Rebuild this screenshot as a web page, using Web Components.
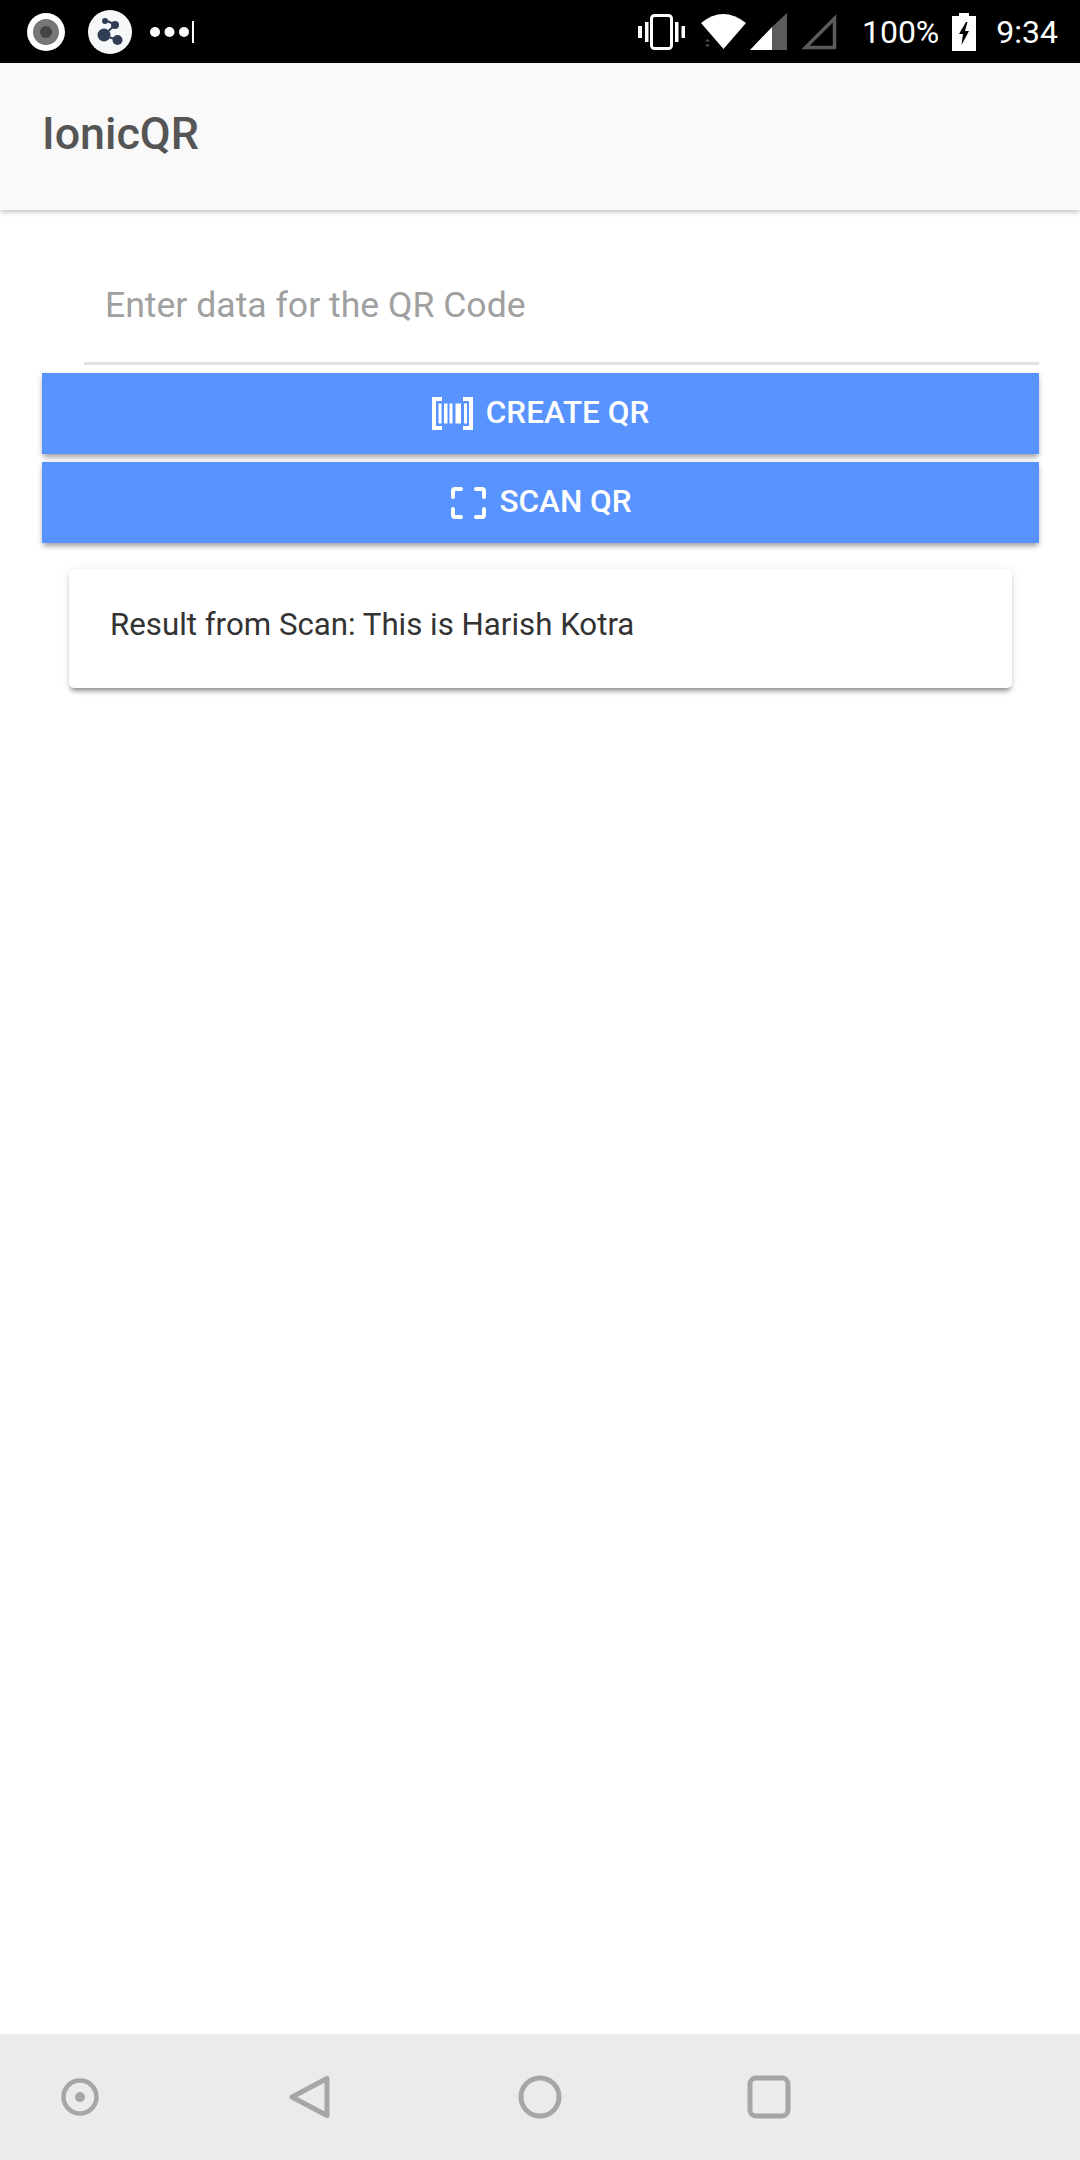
<!DOCTYPE html>
<html lang="en"><head><meta charset="utf-8"><title>IonicQR</title>
<style>html,body{margin:0;padding:0;background:#fff}body{font-family:Roboto,"Liberation Sans",sans-serif}</style>
</head><body>
<qr-app>
  <status-bar slot="status"></status-bar>
  <qr-toolbar slot="top">IonicQR</qr-toolbar>
  <qr-input placeholder="Enter data for the QR Code"></qr-input>
  <qr-button icon="barcode">CREATE QR</qr-button>
  <qr-button icon="scan">SCAN QR</qr-button>
  <qr-card>Result from Scan: This is Harish Kotra</qr-card>
  <nav-bar slot="nav"></nav-bar>
</qr-app>
<script>
function def(name,html){customElements.define(name,class extends HTMLElement{constructor(){super();const r=this.attachShadow({mode:'open'});r.innerHTML=typeof html==='function'?html(this):html;}})}
const ICONS={
barcode:`<svg width="41" height="33" viewBox="0 0 41 33" fill="#fff"><path d="M10 2H2V31H10M31 2H39V31H31" fill="none" stroke="#fff" stroke-width="4"/><rect x="6.500" y="6.500" width="3" height="20"/><rect x="12" y="6.500" width="3.500" height="20"/><rect x="17.500" y="6.500" width="3" height="20"/><rect x="23.500" y="6.500" width="5.500" height="20"/><rect x="32" y="6.500" width="3" height="20"/></svg>`,
scan:`<svg width="35" height="32" viewBox="0 0 35 32" fill="none" stroke="#fff" stroke-width="4" stroke-linecap="round" stroke-linejoin="round"><path d="M2 10V4Q2 2 4 2H10M25 2H31Q33 2 33 4V10M33 22V28Q33 30 31 30H25M10 30H4Q2 30 2 28V22"/></svg>`};
def('qr-app',`<style>:host{display:flex;flex-direction:column;width:1080px;height:2160px;overflow:hidden;background:#fff}
main{flex:1;display:flex;flex-direction:column;padding:0 41px 0 42px}</style>
<slot name="status"></slot><slot name="top"></slot><main><slot></slot></main><slot name="nav"></slot>`);
def('status-bar',`<style>:host{display:flex;align-items:center;height:63px;background:#000;color:#fff;font:400 32px Roboto,sans-serif;flex:none}
svg{display:block;flex:none}.l{display:flex;align-items:center;flex:1;padding-left:27px}.r{display:flex;align-items:center;padding-right:22px}
.pct{margin-left:25px}.time{margin-left:20px}</style>
<div class="l">
<svg width="38" height="38" viewBox="0 0 38 38"><circle cx="19" cy="19" r="19" fill="#fff"/><circle cx="19" cy="19" r="13" fill="#767676"/><circle cx="19" cy="19" r="6" fill="#444"/></svg>
<svg style="margin-left:23px" width="44" height="44" viewBox="0 0 44 44"><circle cx="22" cy="22" r="22" fill="#f7f8fa"/><g fill="#2f3d55"><path d="M17 10L28 15M27 15L16 25M17 26L30 30" fill="none" stroke="#2f3d55" stroke-width="2"/><circle cx="17" cy="11" r="3"/><circle cx="27" cy="15" r="4"/><circle cx="16" cy="25" r="6.500"/><circle cx="29.500" cy="30" r="5"/></g></svg>
<svg style="margin-left:17px" width="46" height="24" viewBox="0 0 46 24" fill="#fff"><circle cx="6" cy="12" r="5"/><circle cx="20.500" cy="12" r="5"/><circle cx="35" cy="12" r="5"/><rect x="43" y="1" width="2" height="22"/></svg>
</div>
<div class="r">
<svg width="47" height="36" viewBox="0 0 47 36" fill="#fff"><rect x="13.500" y="1.500" width="20" height="33" rx="3" fill="none" stroke="#fff" stroke-width="3"/><rect x="0" y="12" width="4" height="12"/><rect x="7" y="8" width="3.500" height="20"/><rect x="37" y="8" width="3.500" height="20"/><rect x="43.500" y="12" width="3.500" height="12"/></svg>
<svg style="margin-left:15px" width="47" height="36" viewBox="0 0 47 36"><path d="M1 9Q23 -9 46 9L23.500 35Z" fill="#fff"/><path d="M5 27.500L7.500 25L10 27.500ZM5 30.500H10L7.500 33Z" fill="#555"/></svg>
<svg style="margin-left:3px" width="37" height="37" viewBox="0 0 37 37"><path d="M37 0V37H22V14Z" fill="#5b5b5b"/><path d="M0 37L22 14V37Z" fill="#fff"/></svg>
<svg style="margin-left:13px" width="37" height="37" viewBox="0 0 37 37"><path d="M34.500 5.500V34.500H5.500Z" fill="none" stroke="#5b5b5b" stroke-width="3.500"/></svg>
<span class="pct">100%</span>
<svg style="margin-left:13px" width="24" height="38" viewBox="0 0 24 38"><path fill-rule="evenodd" d="M7 0H17V3H24V38H0V3H7ZM14 9L7 21H11L9.500 32L17 18H13L15.500 9Z" fill="#fff"/></svg>
<span class="time">9:34</span>
</div>`);
def('qr-toolbar',`<style>:host{display:flex;align-items:center;height:147px;flex:none;background:#f9f9f9;padding:0 0 6px 42px;box-sizing:border-box;color:#555;font:500 44.800px Roboto,sans-serif;box-shadow:0 2px 5px rgba(0,0,0,.25);position:relative;z-index:2}</style><slot></slot>`);
def('qr-input',el=>`<style>:host{display:flex;align-items:center;height:114px;margin-left:42px;padding:38px 0 0 21px;border-bottom:3px solid #e2e2e2;color:#a0a0a0;font:400 35.600px Roboto,sans-serif}</style><div>${el.getAttribute('placeholder')}</div>`);
def('qr-button',el=>`<style>:host{display:flex;align-items:center;justify-content:center;gap:13px;height:81px;margin-top:8px;background:#5893ff;color:#fff;font:500 31.500px Roboto,sans-serif;box-shadow:0 5px 5px -2px rgba(0,0,0,.25),0 2px 6px rgba(0,0,0,.2)}:host([icon=scan]){padding-left:2px}svg{display:block;flex:none}span{position:relative;top:-1px;}</style>${ICONS[el.getAttribute('icon')]}<span><slot></slot></span>`);
def('qr-card',`<style>:host{display:block;margin:26px 27px 0;height:119px;box-sizing:border-box;padding:36px 42px 0 41px;background:#fff;border-radius:5px;color:#333;font:400 31.250px/40px Roboto,sans-serif;box-shadow:0 5px 5px -2px rgba(0,0,0,.4),0 1px 8px rgba(0,0,0,.1)}</style><slot></slot>`);
def('nav-bar',`<style>:host{display:flex;align-items:center;height:126px;flex:none;background:#ebebeb;padding-left:61px}svg{display:block;flex:none}</style>
<svg width="38" height="38" viewBox="0 0 38 38"><circle cx="19" cy="19" r="16.500" fill="none" stroke="#a6a6a6" stroke-width="4.500"/><circle cx="19" cy="19" r="5" fill="#a6a6a6"/></svg>
<svg style="margin-left:190px" width="42" height="44" viewBox="0 0 42 44"><path d="M38 3.500V40.500L3 22Z" fill="none" stroke="#a6a6a6" stroke-width="5" stroke-linejoin="round"/></svg>
<svg style="margin-left:187px" width="44" height="44" viewBox="0 0 44 44"><circle cx="22" cy="22" r="19" fill="none" stroke="#a6a6a6" stroke-width="5"/></svg>
<svg style="margin-left:185px" width="44" height="44" viewBox="0 0 44 44"><rect x="3" y="3" width="38" height="38" rx="6" fill="none" stroke="#a6a6a6" stroke-width="5"/></svg>`);
</script>
</body></html>
